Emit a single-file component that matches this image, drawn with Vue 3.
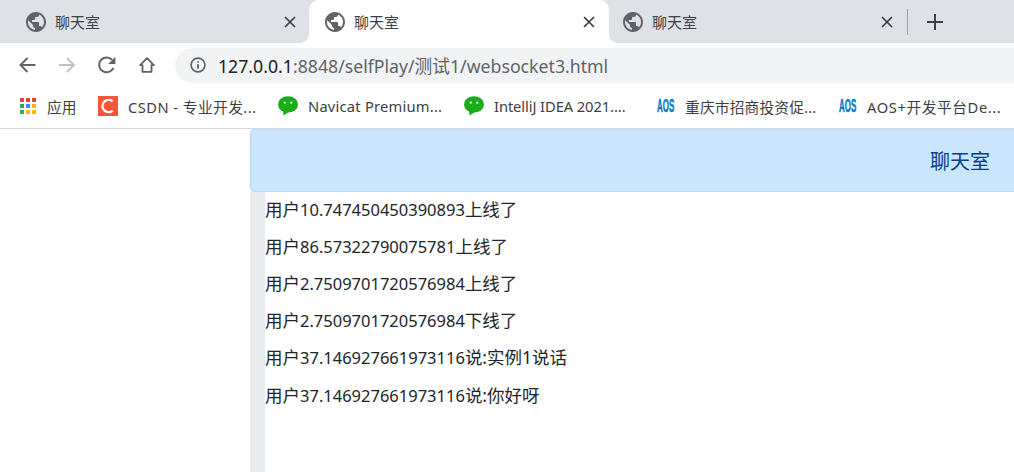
<script setup>
import { ref } from 'vue'

const tabs = ref([
  { id: 1, title: '聊天室', active: false },
  { id: 2, title: '聊天室', active: true },
  { id: 3, title: '聊天室', active: false }
])

const appsColors = ['#ea4335', '#ea4335', '#ea4335', '#34a853', '#4285f4', '#fbbc04', '#34a853', '#fbbc04', '#fbbc04']

const bookmarks = ref([
  { text: '应用', icon: 'apps', w: 79, ls: 0 },
  { text: 'CSDN - 专业开发...', icon: 'csdn', w: 180, ls: 0.45 },
  { text: 'Navicat Premium...', icon: 'wechat', w: 186, ls: 0.23 },
  { text: 'IntelliJ IDEA 2021....', icon: 'wechat', w: 193, ls: -0.08 },
  { text: '重庆市招商投资促...', icon: 'aos', w: 182, ls: 0.2 },
  { text: 'AOS+开发平台De...', icon: 'aos', w: 175, ls: 0.6 }
])

const messages = ref([
  { uid: '10.747450450390893', text: '上线了' },
  { uid: '86.57322790075781', text: '上线了' },
  { uid: '2.7509701720576984', text: '上线了' },
  { uid: '2.7509701720576984', text: '下线了' },
  { uid: '37.146927661973116', text: '说:实例1说话' },
  { uid: '37.146927661973116', text: '说:你好呀' }
])
</script>

<template>
  <div class="browser">
    <div class="tabstrip">
      <div v-for="tab in tabs" :key="tab.id" class="tab" :class="{ active: tab.active }">
        <svg class="globe" viewBox="2 2 20 20" width="20" height="20">
          <path fill="#5f6368" d="M12 2C6.48 2 2 6.48 2 12s4.48 10 10 10 10-4.48 10-10S17.52 2 12 2zm-1 17.93c-3.95-.49-7-3.85-7-7.93 0-.62.08-1.21.21-1.79L9 15v1c0 1.1.9 2 2 2v1.93zm6.9-2.54c-.26-.81-1-1.39-1.9-1.39h-1v-3c0-.55-.45-1-1-1H8v-2h2c.55 0 1-.45 1-1V7h2c1.1 0 2-.9 2-2v-.41c2.93 1.19 5 4.06 5 7.41 0 2.08-.8 3.97-2.1 5.39z" />
        </svg>
        <span class="tab-title">{{ tab.title }}</span>
        <svg class="close" viewBox="0 0 12 12" width="12" height="12">
          <path d="M1 1l10 10M11 1L1 11" stroke="#3c4043" stroke-width="1.7" fill="none" />
        </svg>
      </div>
      <div class="sep"></div>
      <svg class="plus" viewBox="0 0 16 16" width="16" height="16">
        <path d="M8 0v16M0 8h16" stroke="#3c4043" stroke-width="2" fill="none" />
      </svg>
    </div>

    <div class="toolbar">
      <svg class="tool" viewBox="0 0 18 18" width="18" height="18">
        <path d="M17.5 9H3M9.5 2L2.5 9l7 7" stroke="#5f6368" stroke-width="1.9" fill="none" />
      </svg>
      <svg class="tool" viewBox="0 0 18 18" width="18" height="18">
        <path d="M1 9h14.5M9 2l7 7-7 7" stroke="#bdc1c6" stroke-width="1.9" fill="none" />
      </svg>
      <svg class="tool" viewBox="0 0 18 18" width="18" height="18">
        <path d="M15.4 11.8A7.4 7.4 0 1 1 14 3.8" stroke="#5f6368" stroke-width="2" fill="none" />
        <path d="M17.4 .8v7.2h-7.2z" fill="#5f6368" />
      </svg>
      <svg class="tool" viewBox="0 0 18 18" width="18" height="18">
        <path d="M9 2.2L2.2 9.2h2.3v6.6h9V9.2h2.3z" stroke="#5f6368" stroke-width="1.8" stroke-linejoin="round" fill="none" />
      </svg>
      <div class="omnibox">
        <svg class="info" viewBox="0 0 16 16" width="16" height="16">
          <circle cx="8" cy="8" r="6.9" stroke="#5f6368" stroke-width="1.6" fill="none" />
          <path d="M8 7v4.8M8 4.2v1.6" stroke="#5f6368" stroke-width="1.7" />
        </svg>
        <span class="url"><span class="host">127.0.0.1</span>:8848/selfPlay/测试1/websocket3.html</span>
      </div>
    </div>

    <div class="bookmarks">
      <div v-for="b in bookmarks" :key="b.text" class="bookmark" :style="{ width: b.w + 'px' }">
        <span v-if="b.icon === 'apps'" class="apps">
          <i v-for="(c, i) in appsColors" :key="i" :style="{ background: c }"></i>
        </span>
        <svg v-else-if="b.icon === 'csdn'" viewBox="0 0 20 20" width="20" height="20">
          <rect width="20" height="20" fill="#fc5531" />
          <path d="M14.8 5.4A6.2 6.2 0 1 0 14.8 14.6" stroke="#fff" stroke-width="2.3" fill="none" />
        </svg>
        <svg v-else-if="b.icon === 'wechat'" viewBox="0 0 20 20" width="20" height="20">
          <ellipse cx="10" cy="8.4" rx="10" ry="8.2" fill="#1aad19" />
          <path d="M5 14l.6 5.6 5.2-3.6z" fill="#1aad19" />
          <circle cx="6.8" cy="6.6" r="1.2" fill="#d4f2cf" />
          <circle cx="13.2" cy="6.6" r="1.2" fill="#d4f2cf" />
        </svg>
        <span v-else class="aos">AOS</span>
        <span class="bm-text" :style="{ letterSpacing: b.ls + 'px' }">{{ b.text }}</span>
      </div>
    </div>

    <main class="page">
      <div class="panel">
        <div class="alert">聊天室</div>
        <div class="chat">
          <div class="rail"></div>
          <div class="log">
            <p v-for="(m, i) in messages" :key="i">用户<span class="uid">{{ m.uid }}</span>{{ m.text }}</p>
          </div>
        </div>
      </div>
    </main>
  </div>
</template>

<style>
html, body {
  margin: 0;
  overflow: hidden;
  background: #fff;
}
</style>

<style scoped>
.browser {
  width: 1014px;
  height: 472px;
  display: flex;
  flex-direction: column;
  overflow: hidden;
  font-family: "Noto Sans", "Noto Sans CJK SC", sans-serif;
}
.tabstrip {
  height: 43px;
  background: #dee1e6;
  display: flex;
  align-items: center;
  flex-shrink: 0;
}
.tab {
  width: 300px;
  height: 43px;
  padding: 0 13px 0 26px;
  box-sizing: border-box;
  display: flex;
  align-items: center;
  position: relative;
  flex-shrink: 0;
}
.tab:first-child {
  width: 309px;
  padding-right: 13px;
}
.tab:nth-child(3) {
  width: 298px;
  padding-left: 14px;
  padding-right: 14px;
}
.tab.active {
  background: #fff;
  border-radius: 10px 10px 0 0;
  padding-left: 16px;
  padding-right: 14px;
}
.tab.active::before,
.tab.active::after {
  content: "";
  position: absolute;
  bottom: 0;
  width: 10px;
  height: 10px;
}
.tab.active::before {
  left: -10px;
  background: radial-gradient(circle at 0 0, transparent 10px, #fff 10.5px);
}
.tab.active::after {
  right: -10px;
  background: radial-gradient(circle at 100% 0, transparent 10px, #fff 10.5px);
}
.globe {
  flex-shrink: 0;
}
.tab-title {
  margin-left: 9px;
  font-size: 15px;
  color: #3c4043;
  flex: 1;
}
.close {
  flex-shrink: 0;
}
.sep {
  width: 1px;
  height: 26px;
  background: #9aa0a6;
  flex-shrink: 0;
}
.plus {
  margin-left: 19px;
}
.toolbar {
  height: 43px;
  box-sizing: border-box;
  padding: 1px 0 0 18px;
  background: #fff;
  display: flex;
  align-items: center;
  flex-shrink: 0;
}
.tool {
  margin-right: 22px;
  flex-shrink: 0;
}
.tool:nth-child(4) {
  margin-right: 19px;
}
.omnibox {
  flex: 1;
  height: 35px;
  background: #f1f3f4;
  border-radius: 18px 0 0 18px;
  display: flex;
  align-items: center;
  padding-left: 15px;
}
.info {
  flex-shrink: 0;
}
.url {
  margin-left: 12px;
  font-size: 17.7px;
  color: #5f6368;
  white-space: nowrap;
}
.host {
  color: #202124;
}
.bookmarks {
  height: 43px;
  box-sizing: border-box;
  padding: 0 0 2px 19px;
  border-bottom: 1px solid #d5d8dc;
  background: #fff;
  display: flex;
  align-items: center;
  flex-shrink: 0;
}
.bookmark {
  display: flex;
  align-items: center;
  flex-shrink: 0;
  white-space: nowrap;
}
.bm-text {
  margin-left: 10px;
  font-size: 14.7px;
  color: #3c4043;
}
.apps {
  width: 18px;
  height: 16px;
  padding-left: 1px;
  box-sizing: border-box;
  display: grid;
  grid-template-columns: repeat(3, 4px);
  grid-template-rows: repeat(3, 4px);
  gap: 2px;
}
.apps i {
  display: block;
}
.aos {
  width: 17px;
  height: 18px;
  line-height: 18px;
  font-family: "Liberation Sans", sans-serif;
  font-weight: 700;
  font-size: 19px;
  color: #0b7ac4;
  -webkit-text-stroke: 0.5px #0b7ac4;
  transform: scaleX(0.42);
  transform-origin: 0 50%;
  margin-right: 1px;
}
.page {
  flex: 1;
  background: #fff;
  padding-left: 250px;
  display: flex;
  min-height: 0;
  overflow: hidden;
}
.panel {
  width: 790px;
  flex-shrink: 0;
  display: flex;
  flex-direction: column;
}
.alert {
  height: 63px;
  box-sizing: border-box;
  background: #cce5ff;
  border: 1px solid #b8daff;
  border-radius: 4px;
  color: #004085;
  font-size: 20px;
  display: flex;
  align-items: center;
  justify-content: flex-end;
  padding: 0 49px 1px 0;
  flex-shrink: 0;
}
.chat {
  flex: 1;
  display: flex;
}
.rail {
  width: 15px;
  background: #e9ecef;
}
.log {
  flex: 1;
  padding-top: 3.5px;
}
.log p {
  margin: 0 0 10.8px;
  line-height: 26.4px;
  font-size: 17.5px;
  color: #212529;
  white-space: nowrap;
}
.uid {
  font-size: 16.5px;
  line-height: 1;
}
</style>
